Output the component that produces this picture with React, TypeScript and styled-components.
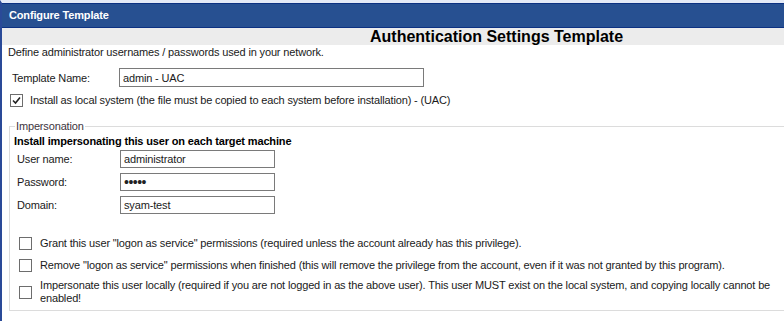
import styled, { createGlobalStyle } from 'styled-components';

const GlobalStyle = createGlobalStyle`
  html, body {
    margin: 0;
    padding: 0;
    background: #ffffff;
  }
  body {
    font-family: "Liberation Sans", Arial, sans-serif;
    font-size: 11px;
    letter-spacing: -0.15px;
    color: #1a1a1a;
  }
`;

const Window = styled.div`
  border-left: 2px solid #2a4a98;
  border-top: 3px solid #e4eaf6;
  height: 321px;
  box-sizing: border-box;
  overflow: hidden;
`;

const Header = styled.div`
  background: #275091;
  border-top: 1px solid #0c3182;
  border-bottom: 1px solid #0c3182;
  color: #ffffff;
  font-weight: bold;
  height: 23px;
  line-height: 23px;
  padding-left: 7px;
`;

const TitleBar = styled.div`
  background: #ececec;
  height: 17px;
  line-height: 17px;
  font-size: 16px;
  font-weight: bold;
  letter-spacing: 0;
  color: #000000;
  padding-left: 368px;
`;

const Content = styled.div`
  padding-left: 6px;
`;

const Intro = styled.div`
  line-height: 14px;
`;

const Row = styled.div<{ $labelWidth: number }>`
  display: grid;
  grid-template-columns: ${(p) => p.$labelWidth}px auto;
  align-items: center;
`;

const TemplateRow = styled(Row)`
  margin-top: 9px;
  padding-left: 4px;
`;

const Label = styled.label`
  line-height: 14px;
`;

const TextInput = styled.input<{ $width: number; $height: number }>`
  width: ${(p) => p.$width}px;
  height: ${(p) => p.$height}px;
  box-sizing: border-box;
  border: 1px solid #7a7a7a;
  padding: 0 3px;
  margin: 0;
  font-family: "Liberation Sans", Arial, sans-serif;
  font-size: 11px;
  letter-spacing: -0.15px;
  color: #1a1a1a;
  outline: none;
`;

const PasswordInput = styled(TextInput)`
  font-size: 14px;
  letter-spacing: -0.5px;
  color: #222222;
`;

const CheckRow = styled.label<{ $minHeight: number }>`
  display: flex;
  align-items: center;
  gap: 7px;
  min-height: ${(p) => p.$minHeight}px;
  line-height: 13px;
`;

const LocalSystemRow = styled(CheckRow)`
  margin-top: 7px;
  padding-left: 2px;
`;

const Box = styled.span`
  flex: 0 0 auto;
  width: 11px;
  height: 11px;
  border: 1px solid #6d6d6d;
  background: #ffffff;
  display: flex;
  align-items: center;
  justify-content: center;
`;

const Fieldset = styled.fieldset`
  border: 1px solid #dcdcdc;
  border-right: none;
  margin: 13px 0 0 1px;
  padding: 0 0 0 4px;
  min-width: 0;
`;

const Legend = styled.legend`
  padding: 0 1px;
  margin-left: 1px;
  color: #3d3540;
  line-height: 12px;
`;

const Subhead = styled.div`
  font-weight: bold;
  color: #000000;
  line-height: 14px;
  margin-top: 2px;
`;

const FieldList = styled.div`
  display: flex;
  flex-direction: column;
  gap: 5px;
  padding-left: 3px;
  margin-top: 2px;
`;

const OptionList = styled.div`
  display: flex;
  flex-direction: column;
  gap: 5px;
  padding: 21px 0 5px 5px;

  ${CheckRow} {
    gap: 8px;
  }
`;

const Check = ({ checked }: { checked?: boolean }) => (
  <Box>
    {checked && (
      <svg width="9" height="9" viewBox="0 0 9 9">
        <path d="M1 4.5 L3.5 7 L8 1.5" fill="none" stroke="#222" strokeWidth="1.6" />
      </svg>
    )}
  </Box>
);

const fields = [
  { label: 'User name:', value: 'administrator' },
  { label: 'Domain:', value: 'syam-test' },
];

const options = [
  'Grant this user "logon as service" permissions (required unless the account already has this privilege).',
  'Remove "logon as service" permissions when finished (this will remove the privilege from the account, even if it was not granted by this program).',
  'Impersonate this user locally (required if you are not logged in as the above user). This user MUST exist on the local system, and copying locally cannot be enabled!',
];

export default function App() {
  return (
    <>
      <GlobalStyle />
      <Window>
        <Header>Configure Template</Header>
        <TitleBar>Authentication Settings Template</TitleBar>
        <Content>
          <Intro>Define administrator usernames / passwords used in your network.</Intro>
          <TemplateRow $labelWidth={107}>
            <Label>Template Name:</Label>
            <TextInput $width={305} $height={19} defaultValue="admin - UAC" />
          </TemplateRow>
          <LocalSystemRow $minHeight={13}>
            <Check checked />
            <span>Install as local system (the file must be copied to each system before installation) - (UAC)</span>
          </LocalSystemRow>
          <Fieldset>
            <Legend>Impersonation</Legend>
            <Subhead>Install impersonating this user on each target machine</Subhead>
            <FieldList>
              <Row $labelWidth={103}>
                <Label>{fields[0].label}</Label>
                <TextInput $width={155} $height={18} defaultValue={fields[0].value} />
              </Row>
              <Row $labelWidth={103}>
                <Label>Password:</Label>
                <PasswordInput $width={155} $height={18} type="password" defaultValue="aaaaa" />
              </Row>
              <Row $labelWidth={103}>
                <Label>{fields[1].label}</Label>
                <TextInput $width={155} $height={18} defaultValue={fields[1].value} />
              </Row>
            </FieldList>
            <OptionList>
              {options.map((text) => (
                <CheckRow key={text} $minHeight={17}>
                  <Check />
                  <span>{text}</span>
                </CheckRow>
              ))}
            </OptionList>
          </Fieldset>
        </Content>
      </Window>
    </>
  );
}
